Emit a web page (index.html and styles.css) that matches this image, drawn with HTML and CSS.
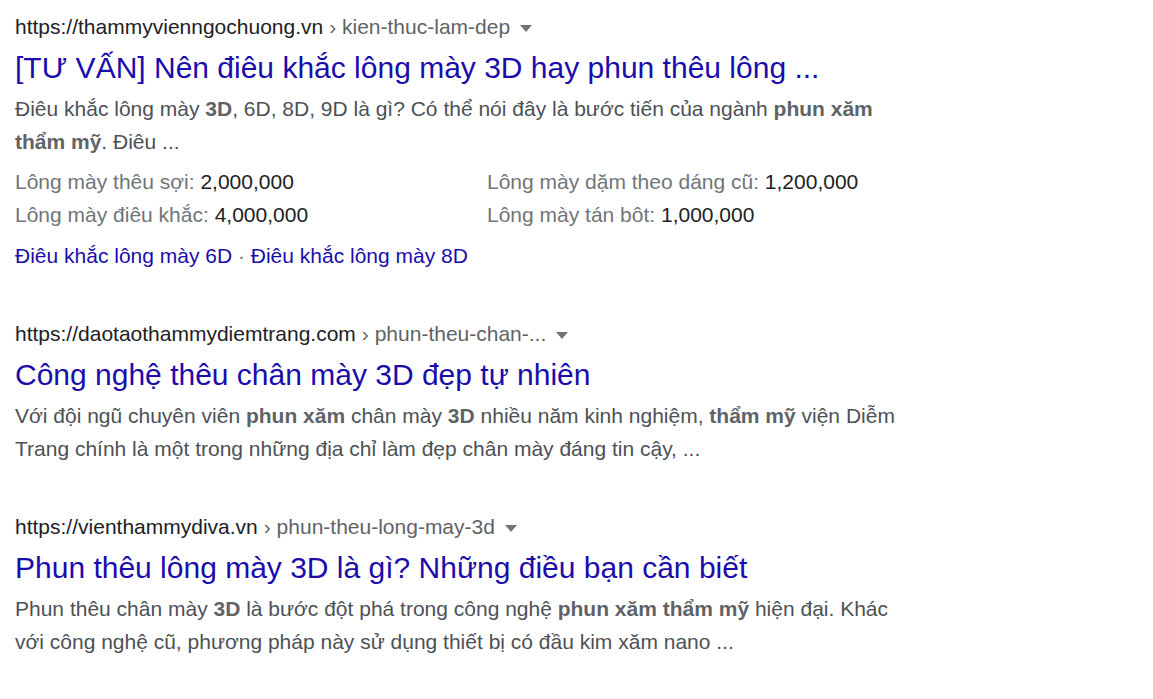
FILE: index.html
```html
<!DOCTYPE html>
<html lang="vi">
<head>
    <meta charset="UTF-8">
    <meta name="viewport" content="width=device-width, initial-scale=1.0">
    <title>Kết quả tìm kiếm</title>
    <link rel="stylesheet" href="styles.css">
</head>
<body>

    <div class="results">

        <!-- kết quả 1 -->
        <div class="result">
            <div class="cite">
                <span class="domain">https://thammyvienngochuong.vn</span>
                <span class="crumb">› kien-thuc-lam-dep</span>
                <span class="caret"></span>
            </div>
            <a class="title" href="#">[TƯ VẤN] Nên điêu khắc lông mày 3D hay phun thêu lông ...</a>
            <div class="snippet">
                Điêu khắc lông mày <b>3D</b>, 6D, 8D, 9D là gì? Có thể nói đây là bước tiến của ngành <b>phun xăm thẩm mỹ</b>. Điêu ...
            </div>
            <div class="facts">
                <div class="fact"><span class="label">Lông mày thêu sợi:</span> 2,000,000</div>
                <div class="fact"><span class="label">Lông mày dặm theo dáng cũ:</span> 1,200,000</div>
                <div class="fact"><span class="label">Lông mày điêu khắc:</span> 4,000,000</div>
                <div class="fact"><span class="label">Lông mày tán bôt:</span> 1,000,000</div>
            </div>
            <div class="sitelinks">
                <a href="#">Điêu khắc lông mày 6D</a><span class="dot"> · </span><a href="#">Điêu khắc lông mày 8D</a>
            </div>
        </div>

        <!-- kết quả 2 -->
        <div class="result">
            <div class="cite">
                <span class="domain">https://daotaothammydiemtrang.com</span>
                <span class="crumb">› phun-theu-chan-...</span>
                <span class="caret"></span>
            </div>
            <a class="title" href="#">Công nghệ thêu chân mày 3D đẹp tự nhiên</a>
            <div class="snippet">
                Với đội ngũ chuyên viên <b>phun xăm</b> chân mày <b>3D</b> nhiều năm kinh nghiệm, <b>thẩm mỹ</b> viện Diễm Trang chính là một trong những địa chỉ làm đẹp chân mày đáng tin cậy, ...
            </div>
        </div>

        <!-- kết quả 3 -->
        <div class="result">
            <div class="cite">
                <span class="domain">https://vienthammydiva.vn</span>
                <span class="crumb">› phun-theu-long-may-3d</span>
                <span class="caret"></span>
            </div>
            <a class="title" href="#">Phun thêu lông mày 3D là gì? Những điều bạn cần biết</a>
            <div class="snippet">
                Phun thêu chân mày <b>3D</b> là bước đột phá trong công nghệ <b>phun xăm thẩm mỹ</b> hiện đại. Khác với công nghệ cũ, phương pháp này sử dụng thiết bị có đầu kim xăm nano ...
            </div>
        </div>

    </div>

</body>
</html>
```

FILE: styles.css
```css
body {
    margin: 0;
    padding: 0;
    background-color: #fff;
    font-family: Arial, "Liberation Sans", sans-serif;
    color: #4d5156;
}

.results {
    padding: 13px 15px;
    width: 900px;
}

.result {
    margin-bottom: 48px;
}

.cite {
    display: flex;
    align-items: center;
    height: 28px;
    font-size: 21px;
    line-height: 28px;
    white-space: nowrap;
}

.domain {
    color: #202124;
}

.crumb {
    color: #5f6368;
    margin-left: 6px;
}

.caret {
    width: 0;
    height: 0;
    margin-left: 10px;
    margin-top: 2px;
    border-left: 6px solid transparent;
    border-right: 6px solid transparent;
    border-top: 7px solid #70757a;
}

.title {
    display: block;
    margin-top: 7px;
    font-size: 30px;
    line-height: 39px;
    color: #1a0dab;
    text-decoration: none;
    white-space: nowrap;
}

.snippet {
    margin-top: 5px;
    font-size: 21px;
    line-height: 33px;
    color: #4d5156;
}

.snippet b {
    color: #5f6368;
}

.facts {
    display: grid;
    grid-template-columns: 472px 1fr;
    margin-top: 7px;
    font-size: 21px;
    line-height: 33px;
    color: #202124;
}

.fact .label {
    color: #70757a;
}

.sitelinks {
    margin-top: 8px;
    font-size: 21px;
    line-height: 33px;
}

.sitelinks a {
    color: #1a0dab;
    text-decoration: none;
}

.dot {
    color: #70757a;
}
```
